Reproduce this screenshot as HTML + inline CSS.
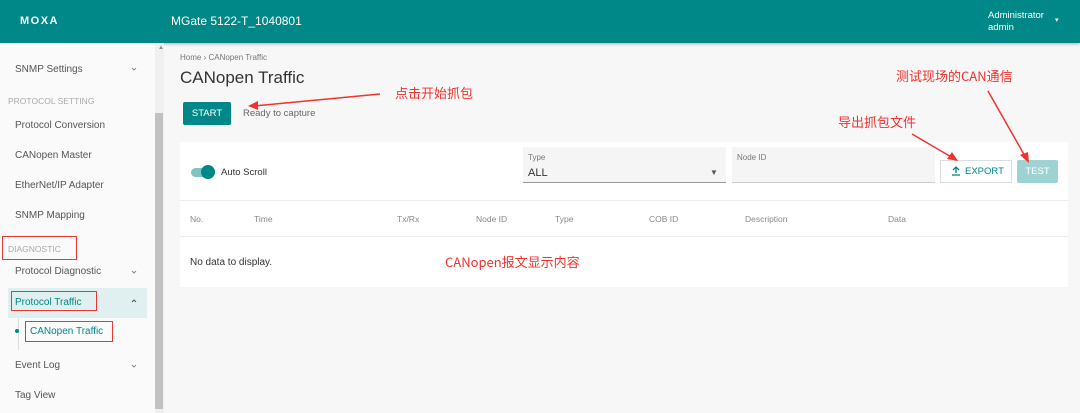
<!DOCTYPE html>
<html><head><meta charset="utf-8"><style>
*{box-sizing:border-box;margin:0;padding:0}
body{width:1080px;height:413px;overflow:hidden;background:#f7f7f7;font-family:"Liberation Sans","Noto Sans CJK SC",sans-serif;position:relative;color:#333}
.a{position:absolute;white-space:nowrap}
.hdr{position:absolute;left:0;top:0;width:1080px;height:43px;background:#008787;box-shadow:0 1px 3px rgba(0,0,0,.3);color:#fff}
.side{position:absolute;left:0;top:43px;width:155px;height:370px;background:#fafafa}
.sb{position:absolute;left:155px;top:43px;width:9px;height:370px;background:#f0f0f0}
.sbt{position:absolute;left:155px;top:113px;width:8px;height:296px;background:#c1c1c1}
.it{font-size:10px;color:#555}
.sec{font-size:8.5px;color:#aaa}
.red{border:1.5px solid #e53935;position:absolute}
.cn{color:#f2322f;font-size:13px;font-family:"Noto Sans CJK SC",sans-serif}
.th{font-size:8.5px;color:#888}
</style></head><body>
<div class="hdr">
<div class="a" style="left:20px;top:15px;font-size:11px;font-weight:bold;letter-spacing:1.5px">MOXA</div>
<div class="a" style="left:171px;top:14px;font-size:12px">MGate 5122-T_1040801</div>
<div class="a" style="left:988px;top:10px;font-size:9.5px;line-height:12px">Administrator<br>admin</div>
<div class="a" style="left:1055px;top:16px;font-size:7px">▾</div>
</div>
<div class="side">
<div class="a it" style="left:15px;top:21px">SNMP Settings</div>
<div class="a it" style="left:8px;top:53px;font-size:8.5px;color:#aaa">PROTOCOL SETTING</div>
<div class="a it" style="left:15px;top:77px">Protocol Conversion</div>
<div class="a it" style="left:15px;top:107px">CANopen Master</div>
<div class="a it" style="left:15px;top:137px">EtherNet/IP Adapter</div>
<div class="a it" style="left:15px;top:167px">SNMP Mapping</div>
<div class="a sec" style="left:8px;top:201px">DIAGNOSTIC</div>
<div class="red" style="left:2px;top:193px;width:75px;height:24px"></div>
<div class="a it" style="left:15px;top:223px">Protocol Diagnostic</div>
<div class="a" style="left:8px;top:245px;width:139px;height:30px;background:#e0efef"></div>
<div class="a it" style="left:15px;top:254px;color:#008787">Protocol Traffic</div>
<div class="red" style="left:11px;top:248px;width:86px;height:20px"></div>
<div class="a" style="left:18px;top:275px;width:1px;height:32px;background:#ddd"></div>
<div class="a" style="left:15px;top:286px;width:4px;height:4px;border-radius:50%;background:#008787"></div>
<div class="a it" style="left:30px;top:283px;color:#008787">CANopen Traffic</div>
<div class="red" style="left:25px;top:278px;width:88px;height:21px"></div>
<div class="a it" style="left:15px;top:317px">Event Log</div>
<div class="a it" style="left:15px;top:347px">Tag View</div>
</div>
<svg class="a" style="left:0;top:0" width="160" height="413"><g stroke="#888" stroke-width="1" fill="none">
<polyline points="132,68 134,70 136,68"/><polyline points="132,271 134,273 136,271"/><polyline points="132,365 134,367 136,365"/><polyline points="132,302 134,300 136,302" stroke="#555"/></g></svg>
<div class="sb"></div><div class="sbt"></div>
<div class="a" style="left:158px;top:45px;font-size:6px;color:#888">▲</div>
<div class="a" style="left:180px;top:53px;font-size:8px;color:#777">Home › CANopen Traffic</div>
<div class="a" style="left:180px;top:68px;font-size:17px;color:#333">CANopen Traffic</div>
<div class="a" style="left:183px;top:102px;width:48px;height:23px;background:#008787;color:#fff;font-size:9.5px;text-align:center;line-height:23px;border-radius:2px">START</div>
<div class="a" style="left:243px;top:108px;font-size:9.5px;color:#666">Ready to capture</div>
<div class="a" style="left:180px;top:142px;width:888px;height:145px;background:#fff"></div>
<div class="a" style="left:191px;top:168px;width:24px;height:9px;border-radius:5px;background:#7fc3c3"></div>
<div class="a" style="left:201px;top:165px;width:14px;height:14px;border-radius:50%;background:#008787"></div>
<div class="a" style="left:221px;top:167px;font-size:9.5px">Auto Scroll</div>
<div class="a" style="left:523px;top:147px;width:203px;height:36px;background:#f5f5f5;border-bottom:1px solid #999"></div>
<div class="a" style="left:528px;top:153px;font-size:8px;color:#777">Type</div>
<div class="a" style="left:528px;top:167px;font-size:11px">ALL</div>
<div class="a" style="left:710px;top:168px;font-size:8px;color:#555">▼</div>
<div class="a" style="left:732px;top:147px;width:203px;height:36px;background:#f5f5f5;border-bottom:1px solid #ccc"></div>
<div class="a" style="left:737px;top:153px;font-size:8px;color:#777">Node ID</div>
<div class="a" style="left:940px;top:160px;width:72px;height:23px;border:1px solid #ddd"></div>
<svg class="a" style="left:951px;top:166px" width="10" height="10"><g stroke="#008787" stroke-width="1.3" fill="none"><line x1="5" y1="1" x2="5" y2="7"/><polyline points="2,4 5,1 8,4"/><line x1="1" y1="9" x2="9" y2="9"/></g></svg>
<div class="a" style="left:965px;top:166px;font-size:9.5px;color:#008787">EXPORT</div>
<div class="a" style="left:1017px;top:160px;width:41px;height:23px;background:#9fd3d3;color:#fff;font-size:9.5px;line-height:23px;text-align:center;border-radius:2px">TEST</div>
<div class="a" style="left:180px;top:200px;width:888px;height:1px;background:#eee"></div>
<div class="a th" style="left:190px;top:214px">No.</div>
<div class="a th" style="left:254px;top:214px">Time</div>
<div class="a th" style="left:397px;top:214px">Tx/Rx</div>
<div class="a th" style="left:476px;top:214px">Node ID</div>
<div class="a th" style="left:555px;top:214px">Type</div>
<div class="a th" style="left:649px;top:214px">COB ID</div>
<div class="a th" style="left:745px;top:214px">Description</div>
<div class="a th" style="left:888px;top:214px">Data</div>
<div class="a" style="left:180px;top:236px;width:888px;height:1px;background:#eee"></div>
<div class="a" style="left:190px;top:257px;font-size:10px">No data to display.</div>
<div class="a cn" style="left:445px;top:252px">CANopen报文显示内容</div>
<div class="a cn" style="left:395px;top:83px">点击开始抓包</div>
<div class="a cn" style="left:838px;top:112px">导出抓包文件</div>
<div class="a cn" style="left:896px;top:66px">测试现场的CAN通信</div>
<svg class="a" style="left:0;top:0" width="1080" height="413"><g stroke="#f2322f" stroke-width="1.5" fill="#f2322f">
<line x1="380" y1="94" x2="254" y2="106"/><polygon points="248,106 258,101 258,110" stroke="none"/>
<line x1="912" y1="134" x2="953" y2="158"/><polygon points="958,161 947,159 952,152" stroke="none"/>
<line x1="988" y1="91" x2="1026" y2="158"/><polygon points="1029,163 1020,155 1028,152" stroke="none"/>
</g></svg>
</body></html>
